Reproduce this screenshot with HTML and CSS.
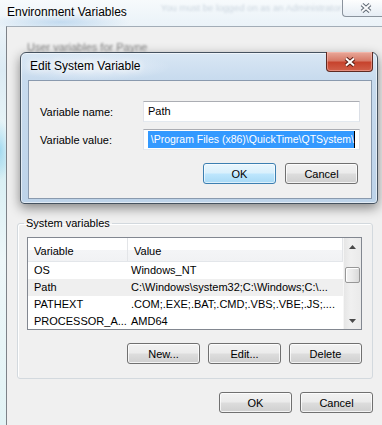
FILE: index.html
```html
<!DOCTYPE html>
<html>
<head>
<title>Environment Variables</title>
<link rel="stylesheet" href="styles.css">
</head>
<body>
  <div id="desktop">
    <div id="env_title">
      <span class="caption">Environment Variables</span>
      <span class="ghost_text">You must be logged on as an Administrator</span>
      <span class="close_btn">
        <svg width="12" height="10" viewBox="0 0 12 10">
          <path d="M2 1.5L10 8.5M10 1.5L2 8.5" stroke="#5e6873" stroke-width="4"/>
          <path d="M2 1.5L10 8.5M10 1.5L2 8.5" stroke="#fbfcfd" stroke-width="2"/>
        </svg>
      </span>
    </div>
    <div id="env_client">
      <div class="ghost_label">User variables for Payne</div>
      <fieldset class="group">
        <legend>System variables</legend>
        <div class="list">
          <div class="list_body">
            <div class="lv_head">
              <div class="lv_col">Variable</div>
              <div class="lv_col">Value</div>
            </div>
            <div class="lv_row">
              <div class="lv_name">OS</div>
              <div class="lv_value">Windows_NT</div>
            </div>
            <div class="lv_row hot">
              <div class="lv_name">Path</div>
              <div class="lv_value">C:\Windows\system32;C:\Windows;C:\...</div>
            </div>
            <div class="lv_row">
              <div class="lv_name">PATHEXT</div>
              <div class="lv_value">.COM;.EXE;.BAT;.CMD;.VBS;.VBE;.JS;....</div>
            </div>
            <div class="lv_row">
              <div class="lv_name">PROCESSOR_A...</div>
              <div class="lv_value">AMD64</div>
            </div>
          </div>
          <div class="vscroll">
            <div class="sb_arrow">
              <svg width="7" height="4" viewBox="0 0 7 4"><path d="M0 4L3.5 0L7 4Z" fill="#4a4a4a"/></svg>
            </div>
            <div class="sb_track"><div class="sb_thumb"></div></div>
            <div class="sb_arrow">
              <svg width="7" height="4" viewBox="0 0 7 4"><path d="M0 0L3.5 4L7 0Z" fill="#4a4a4a"/></svg>
            </div>
          </div>
        </div>
        <div class="btn_row">
          <button class="btn">New...</button>
          <button class="btn">Edit...</button>
          <button class="btn">Delete</button>
        </div>
      </fieldset>
      <div class="btn_row main_btns">
        <button class="btn">OK</button>
        <button class="btn">Cancel</button>
      </div>
    </div>

    <div id="edit_dialog">
      <div class="dlg_title">
        <span class="dlg_caption">Edit System Variable</span>
        <span class="close_red">
          <svg width="12" height="10" viewBox="0 0 12 10">
            <path d="M2 1.5L10 8.5M10 1.5L2 8.5" stroke="#5a1d14" stroke-width="4"/>
            <path d="M2 1.5L10 8.5M10 1.5L2 8.5" stroke="#ffffff" stroke-width="2"/>
          </svg>
        </span>
      </div>
      <div class="dlg_client">
        <div class="form_row">
          <label class="form_label">Variable name:</label>
          <div class="field">Path</div>
        </div>
        <div class="form_row">
          <label class="form_label">Variable value:</label>
          <div class="field scrolled"><span class="sel">\Program Files (x86)\QuickTime\QTSystem\</span></div>
        </div>
        <div class="btn_row dlg_btns">
          <button class="btn default">OK</button>
          <button class="btn">Cancel</button>
        </div>
      </div>
    </div>
  </div>
</body>
</html>
```

FILE: styles.css
```css
body {
  margin: 0;
  overflow: hidden;
  font-family: "Liberation Sans", Arial, sans-serif;
  font-size: 11px;
  color: #000;
}
#desktop {
  position: relative;
  width: 382px;
  height: 425px;
  overflow: hidden;
  background:
    radial-gradient(ellipse 70px 10px at 60px 22px, rgba(160, 198, 232, 0.55), transparent),
    radial-gradient(ellipse 10px 30px at 0 150px, rgba(120, 200, 235, 0.6), transparent),
    linear-gradient(180deg, #f7fafc 0, #edf4f9 20px, #dcebf4 70px, #eaf6f8 140px,
      #d6eef3 165px, #eef7f9 260px, #e2f3f5 425px);
}

/* outer window caption */
#env_title {
  height: 26px;
  display: flex;
  align-items: flex-start;
}
.caption {
  flex-shrink: 0;
  white-space: nowrap;
  font-size: 12px;
  line-height: 15px;
  padding: 5px 0 0 7px;
  text-shadow: 0 0 6px #fff, 0 0 10px #fff;
}
.ghost_text {
  margin-left: 34px;
  padding-top: 2px;
  line-height: 12px;
  font-size: 9.5px;
  color: #8ea0b3;
  opacity: 0.4;
  filter: blur(1.2px);
  white-space: nowrap;
}
.close_btn {
  margin-left: auto;
  flex-shrink: 0;
  width: 44px;
  height: 17px;
  box-sizing: border-box;
  border: 1px solid #8a939d;
  border-top: none;
  border-right: none;
  border-radius: 0 0 0 4px;
  background: linear-gradient(180deg, rgba(255, 255, 255, 0.75), rgba(226, 234, 242, 0.7));
  display: flex;
  align-items: center;
  justify-content: center;
  padding-left: 4px;
}

#env_client {
  margin-left: 6px;
  height: 399px;
  box-sizing: border-box;
  border-left: 1px solid #7d8288;
  border-top: 1px solid #a3adb7;
  background: #f0f0f0;
  display: flex;
  flex-direction: column;
}
.ghost_label {
  margin: 13px 0 0 20px;
  line-height: 14px;
  color: #333;
  opacity: 0.6;
  filter: blur(0.8px);
}

/* group box */
.group {
  margin: 162px 9px 0 10px;
  padding: 0 10px 14px 9px;
  min-width: 0;
  border: 1px solid #d3d9de;
  border-radius: 3px;
  box-shadow: inset 1px 1px 0 #fff;
}
.group legend {
  padding: 0 2px;
  margin-left: -3px;
  line-height: 14px;
}

.list {
  margin-top: 7px;
  height: 93px;
  box-sizing: border-box;
  border: 1px solid #828790;
  background: #fff;
  display: flex;
  overflow: hidden;
}
.list_body {
  flex: 1;
  min-width: 0;
}
.lv_head {
  display: grid;
  grid-template-columns: 100px 1fr;
  height: 24px;
  background: linear-gradient(180deg, #fff 0, #fff 50%, #f4f5f7 51%, #f1f2f4 100%);
  border-bottom: 1px solid #e3e6ea;
  box-sizing: border-box;
}
.lv_col {
  padding: 3px 0 0 6px;
  line-height: 20px;
  border-right: 1px solid #e3e5e8;
}
.lv_row {
  display: grid;
  grid-template-columns: 100px 1fr;
  height: 17px;
  line-height: 17px;
  white-space: nowrap;
}
.lv_row.hot {
  background: #efefef;
}
.lv_name {
  padding-left: 6px;
  overflow: hidden;
}
.lv_value {
  padding-left: 3px;
  overflow: hidden;
}

.vscroll {
  width: 17px;
  flex-shrink: 0;
  display: flex;
  flex-direction: column;
  background: linear-gradient(90deg, #e6e6e6, #f0f0f0 40%, #eaeaea);
  border-left: 1px solid #f6f6f6;
}
.sb_arrow {
  height: 17px;
  display: flex;
  align-items: center;
  justify-content: center;
}
.sb_track {
  flex: 1;
}
.sb_thumb {
  margin: 12px 0 0 1px;
  width: 15px;
  height: 16px;
  box-sizing: border-box;
  border: 1px solid #979797;
  border-radius: 2px;
  background: linear-gradient(90deg, #f4f4f4, #e9e9e9 50%, #d9d9d9);
  box-shadow: inset 1px 1px 0 #fff;
}

/* buttons */
.btn_row {
  display: flex;
  justify-content: flex-end;
  gap: 8px;
  margin-top: 13px;
}
.main_btns {
  padding-right: 9px;
}
.btn {
  width: 73px;
  height: 21px;
  padding: 0;
  font-family: "Liberation Sans", Arial, sans-serif;
  font-size: 11px;
  color: #000;
  border: 1px solid #707070;
  border-radius: 3px;
  background: linear-gradient(180deg, #f2f2f2 0, #ebebeb 48%, #dddddd 52%, #cfcfcf 100%);
  box-shadow: inset 0 0 0 1px rgba(255, 255, 255, 0.75);
}
.btn.default {
  border-color: #3c7fb1;
  background: linear-gradient(180deg, #eaf6fd 0, #d9f0fc 48%, #bee6fd 52%, #a7d9f5 100%);
  box-shadow: inset 0 0 0 1px rgba(255, 255, 255, 0.6);
}

/* edit dialog, lies over the parent window */
#edit_dialog {
  position: absolute;
  left: 20px;
  top: 52px;
  width: 358px;
  height: 152px;
  box-sizing: border-box;
  padding: 0 5px 4px 7px;
  border: 1px solid #45525f;
  border-radius: 6px 6px 4px 4px;
  background:
    radial-gradient(ellipse 80px 14px at 70px 14px, rgba(240, 246, 252, 0.8), transparent),
    linear-gradient(180deg, #d9e7f4 0, #c8dbee 26px, #bdd3e9 100%);
  box-shadow: 0 4px 12px rgba(0, 0, 0, 0.45), inset 0 0 0 1px rgba(255, 255, 255, 0.55);
  display: flex;
  flex-direction: column;
}
.dlg_title {
  height: 27px;
  display: flex;
  align-items: flex-start;
}
.dlg_caption {
  font-size: 12px;
  line-height: 15px;
  padding: 6px 0 0 2px;
  text-shadow: 0 0 6px #fff, 0 0 10px #fff;
}
.close_red {
  margin: -1px -1px 0 auto;
  width: 47px;
  height: 20px;
  box-sizing: border-box;
  border: 1px solid #5e2a22;
  border-top: none;
  border-radius: 0 0 4px 4px;
  background: linear-gradient(180deg, #e9a99b 0, #d77a68 45%, #c7432d 55%, #d1604a 100%);
  box-shadow: inset 0 0 0 1px rgba(255, 200, 190, 0.45);
  display: flex;
  align-items: center;
  justify-content: center;
}
.dlg_client {
  flex: 1;
  border: 1px solid #8a9aae;
  background: #f0f0f0;
  padding: 20px 11px 0 11px;
}
.form_row {
  display: flex;
  align-items: center;
  margin-bottom: 7px;
}
.form_label {
  width: 103px;
  flex-shrink: 0;
}
.field {
  flex: 1;
  min-width: 0;
  height: 21px;
  box-sizing: border-box;
  border: 1px solid;
  border-color: #abadb3 #dbdfe6 #e3e9ef #e2e3ea;
  background: #fff;
  padding: 0 4px;
  line-height: 19px;
  white-space: nowrap;
}
.field.scrolled {
  display: flex;
  overflow: hidden;
  padding: 1px 4px 1px 4px;
}
.sel {
  flex: 1;
  text-align: right;
  font-size: 10.5px;
  background: #3399ff;
  color: #fff;
  line-height: 17px;
  border-right: 1px solid #000;
}
.dlg_btns {
  margin-top: 13px;
  gap: 9px;
  padding-right: 2px;
}
```
